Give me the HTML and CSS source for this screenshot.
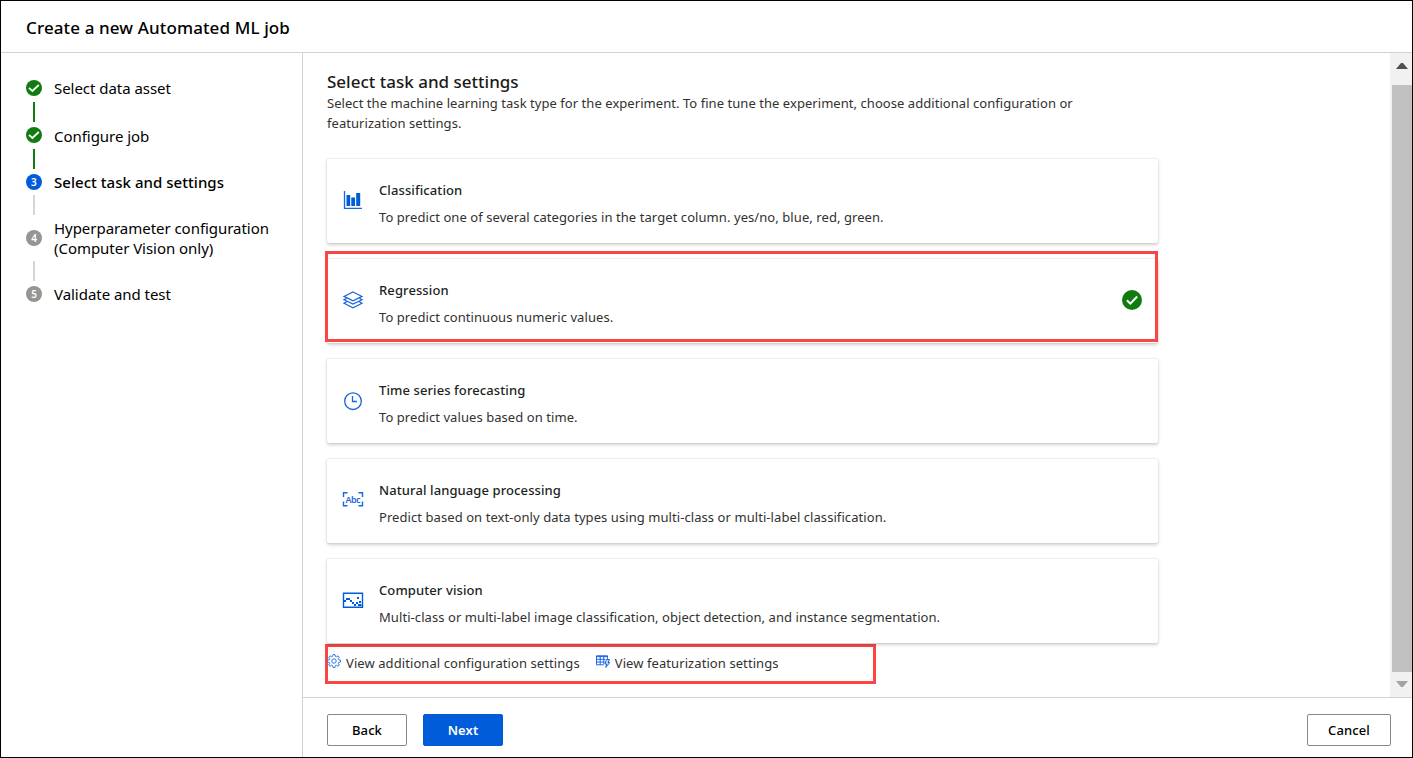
FILE: index.html
```html
<!DOCTYPE html>
<html lang="en">
<head>
<meta charset="utf-8">
<title>Create a new Automated ML job</title>
<link rel="stylesheet" href="styles.css">
</head>
<body>
<div class="app">
  <header class="header"><h1 class="title">Create a new Automated ML job</h1></header>
  <div class="body">
    <nav class="steps">
      <div class="step"><svg class="badge" viewBox="0 0 16 16"><circle cx="8" cy="8" r="8" fill="#107c10"/><path d="M3 7.800 6.400 11 12.800 5" fill="none" stroke="#fff" stroke-width="1.800"/></svg><span>Select data asset</span></div>
      <div class="link done first"></div>
      <div class="step second"><svg class="badge" viewBox="0 0 16 16"><circle cx="8" cy="8" r="8" fill="#107c10"/><path d="M3 7.800 6.400 11 12.800 5" fill="none" stroke="#fff" stroke-width="1.800"/></svg><span>Configure job</span></div>
      <div class="link done"></div>
      <div class="step current"><span class="badge num">3</span><span>Select task and settings</span></div>
      <div class="link"></div>
      <div class="step"><span class="badge num">4</span><span>Hyperparameter configuration<br>(Computer Vision only)</span></div>
      <div class="link"></div>
      <div class="step"><span class="badge num">5</span><span>Validate and test</span></div>
    </nav>
    <main class="main">
      <div class="pane">
        <section class="content">
          <h2 class="heading">Select task and settings</h2>
          <p class="intro">Select the machine learning task type for the experiment. To fine tune the experiment, choose additional configuration or<br>featurization settings.</p>
          <div class="cards">
            <article class="card">
              <svg class="icon" viewBox="0 0 22 22"><path d="M2.500 2v17.300H20" fill="none" stroke="#1a66dd" stroke-width="1.300"/><path d="M4.500 6h3.700v11H4.500zM9.300 8.500H13V17H9.300zM14.200 4h4v13h-4z" fill="#015cda"/></svg>
              <div class="copy"><h3 class="name">Classification</h3><p class="desc">To predict one of several categories in the target column. yes/no, blue, red, green.</p></div>
            </article>
            <article class="card">
              <svg class="icon" viewBox="0 0 22 22" fill="none" stroke="#1a66dd" stroke-width="1.200"><path d="M11 3 20 7.400l-9 4.400-9-4.400z"/><path d="M4.500 9.400 2 10.700l9 4.400 9-4.400-2.500-1.300M4.500 12.900 2 14.200l9 4.700 9-4.700-2.500-1.300"/></svg>
              <div class="copy"><h3 class="name">Regression</h3><p class="desc">To predict continuous numeric values.</p></div>
              <svg class="check" viewBox="0 0 20 20"><circle cx="10" cy="10" r="10" fill="#107c10"/><path d="M4.900 10.300 8.300 13.600 15.200 6.500" fill="none" stroke="#fff" stroke-width="2"/></svg>
              <span class="mark"></span>
            </article>
            <article class="card">
              <svg class="icon" viewBox="0 0 22 22" fill="none" stroke="#1a66dd" stroke-width="1.300"><circle cx="11" cy="12.200" r="8.300"/><path d="M10.500 7v5.500H15"/></svg>
              <div class="copy"><h3 class="name">Time series forecasting</h3><p class="desc">To predict values based on time.</p></div>
            </article>
            <article class="card">
              <svg class="icon" viewBox="0 0 22 22"><path d="M5.500 3.700H1.500V8M1.500 12.500v4.300h4M16.500 3.700h4V8M20.500 12.500v4.300h-4" fill="none" stroke="#1a66dd" stroke-width="1.400"/><text class="abc" x="11" y="14" text-anchor="middle" textLength="15">Abc</text></svg>
              <div class="copy"><h3 class="name">Natural language processing</h3><p class="desc">Predict based on text-only data types using multi-class or multi-label classification.</p></div>
            </article>
            <article class="card">
              <svg class="icon" viewBox="0 0 22 22"><path d="M1.500 4.200h19v14h-19z" fill="none" stroke="#015cda" stroke-width="1.400"/><path d="M2 11h2v2H2zM4 9h2v2H4zM6 9h2v2H6zM8 11h2v2H8zM10 13h2v2h-2zM12 15h2v2h-2zM14 13h2v2h-2zM16 15h3.500v2H16zM17 12h2v2h-2zM15 8h2v2h-2z" fill="#015cda"/></svg>
              <div class="copy"><h3 class="name">Computer vision</h3><p class="desc">Multi-class or multi-label image classification, object detection, and instance segmentation.</p></div>
            </article>
          </div>
          <div class="links">
            <a class="action"><svg class="small" viewBox="0 0 14 14" fill="none" stroke="#2b78e4" stroke-width="1"><circle cx="7" cy="7" r="2.200"/><path d="M6 .6h2l.4 1.800 1 .4 1.600-1 1.300 1.400-1 1.500.4 1 1.800.400v1.900l-1.800.4-.4 1 1 1.600-1.400 1.300-1.500-1-1 .4L8 13.400H6l-.4-1.700-1-.4-1.500 1L1.700 11l1-1.600-.4-1L.5 8V6.100l1.800-.4.4-1-1-1.500L3.100 1.800l1.500 1 1-.4z"/></svg>View additional configuration settings</a>
            <a class="action"><svg class="small" viewBox="0 0 14 14" fill="none" stroke="#1a66dd" stroke-width="1"><path d="M7.500 10.800h-7v-9h11v3M.5 2.600h11M.5 5.300h9M.5 8h8M4.200 2v8.500M7.800 2v8.500"/><path d="M10.500 5.500h3l-1.500 3h1.800l-4.100 5 1-3.500H9z" fill="#cfe2fb"/></svg>View featurization settings</a>
          </div>
        </section>
        <div class="scrollbar"><span class="up"></span><span class="thumb"></span><span class="down"></span></div>
      </div>
      <footer class="footer">
        <button class="btn">Back</button>
        <button class="btn primary">Next</button>
        <button class="btn cancel">Cancel</button>
      </footer>
    </main>
  </div>
</div>
</body>
</html>
```
FILE: styles.css
```css
* { box-sizing: border-box; }
body { margin: 0; background: #fff; color: #000; font-family: "Noto Sans", "Open Sans", sans-serif; font-size: 16px; }
h1, h2, h3, p { margin: 0; font-weight: 400; }
.app { display: flex; flex-direction: column; width: 1413px; height: 758px; border: 1px solid #000; overflow: hidden; }
.header { display: flex; align-items: center; height: 52px; padding: 2px 0 0 25px; border-bottom: 1px solid #d2d2d2; }
.title { font-size: 17px; font-weight: 500; line-height: 24px; letter-spacing: 0.12px; }
.body { display: flex; flex: 1; min-height: 0; }
.steps { width: 302px; padding: 25px 0 0 25px; border-right: 1px solid #d2d2d2; font-size: 15px; line-height: 20px; letter-spacing: -0.04px; }
.step { display: flex; align-items: center; gap: 12px; }
.badge { width: 16px; height: 16px; flex: none; }
.num { border-radius: 50%; background: #979593; color: #fff; font-size: 10px; font-weight: 600; line-height: 16px; text-align: center; }
.second { height: 21px; align-items: flex-end; }
.second .badge { margin-bottom: 3px; }
.current { font-weight: 500; letter-spacing: 0.04px; }
.current .num { background: #015cda; }
.link { width: 2px; height: 20px; margin: 3px 0 3px 7px; background: #d6d6d6; }
.done { background: #107c10; }
.first { margin-top: 4px; }
.main { display: flex; flex-direction: column; flex: 1; }
.pane { display: flex; flex: 1; min-height: 0; }
.content { flex: 1; padding: 17px 0 0 24px; }
.heading { height: 23px; font-size: 17px; font-weight: 500; line-height: 24px; color: #1b1a19; }
.intro { font-size: 13px; line-height: 20px; letter-spacing: 0.05px; color: #323130; }
.cards { display: flex; flex-direction: column; gap: 16px; margin-top: 26px; }
.card { position: relative; display: flex; align-items: center; width: 831px; height: 84px; padding: 0 16px 0 15px; border-radius: 2px; background: #fff; box-shadow: 0 1.600px 3.600px rgba(0,0,0,.18), 0 0 1.500px rgba(0,0,0,.16); }
.icon { width: 22px; height: 22px; flex: none; margin: 0 15px 2px 0; }
.copy { flex: 1; padding-top: 4px; }
.name { font-size: 13px; font-weight: 500; line-height: 20px; letter-spacing: 0.1px; color: #201f1e; }
.desc { margin-top: 7px; font-size: 13px; line-height: 20px; letter-spacing: 0.07px; color: #323130; }
.check { width: 20px; height: 20px; margin-bottom: 2px; }
.mark { position: absolute; left: -2px; top: -8px; width: 833px; height: 91px; border: 3px solid #fa4545; }
.abc { font: 600 9px "Noto Sans", sans-serif; fill: #1a66dd; }
.links { display: flex; gap: 16px; width: 551px; height: 40px; margin: 1px 0 0 -2px; border: 3px solid #fa4545; }
.action { display: flex; align-items: flex-start; margin-left: -1px; font-size: 13px; line-height: 33px; letter-spacing: 0.08px; color: #323130; }
.action + .action { margin-left: 0; }
.small { width: 14px; height: 14px; margin: 7px 5px 0 0; }
.scrollbar { display: flex; flex-direction: column; width: 22px; background: #f1f1f1; padding-left: 2px; }
.up { height: 0; margin: 10px 4px 16px; border: 5.500px solid transparent; border-top: 0; border-bottom: 6px solid #505050; }
.thumb { height: 587px; background: #c1c1c1; }
.down { height: 0; margin: 9px 4px; border: 5.500px solid transparent; border-bottom: 0; border-top: 6px solid #a3a3a3; }
.footer { display: flex; gap: 16px; height: 60px; padding: 16px 21px 0 24px; border-top: 1px solid #d2d2d2; }
.btn { width: 80px; height: 32px; padding: 0; border: 1px solid #8a8886; border-radius: 2px; background: #fff; color: #000; font: 500 13px "Noto Sans", sans-serif; letter-spacing: 0.1px; }
.primary { border-color: #015cda; background: #015cda; color: #fff; font-weight: 600; }
.cancel { width: 84px; margin-left: auto; }
```
